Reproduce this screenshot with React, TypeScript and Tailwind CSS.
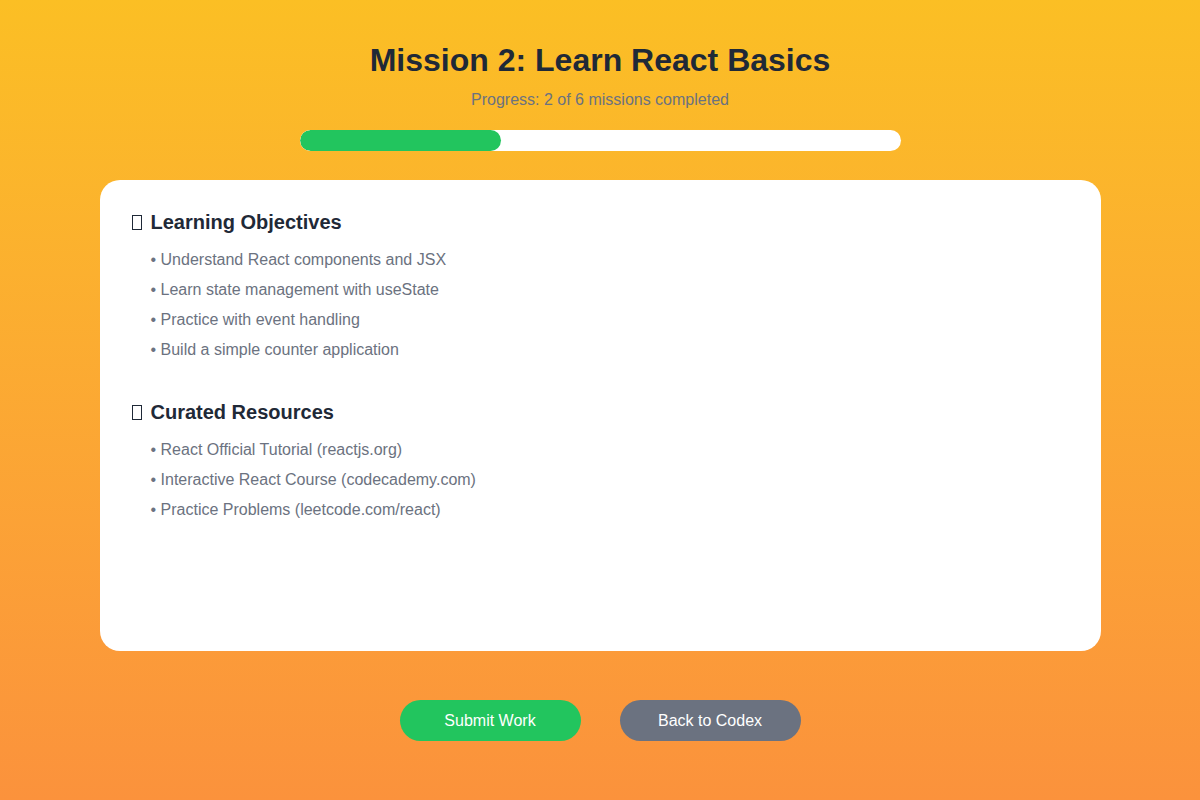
import React from "react";

const objectives = [
  "Understand React components and JSX",
  "Learn state management with useState",
  "Practice with event handling",
  "Build a simple counter application",
];

const resources = [
  "React Official Tutorial (reactjs.org)",
  "Interactive React Course (codecademy.com)",
  "Practice Problems (leetcode.com/react)",
];

function Section({ title, items, className }: { title: string; items: string[]; className?: string }) {
  return (
    <div className={className}>
      <h2 className="flex items-center text-[20px] leading-[23px] font-bold text-[#1f2937]">
        <span className="inline-block ml-[2px] mr-[9px] w-[10px] h-[15px] border border-[#1f2937]" />
        {title}
      </h2>
      <ul className="mt-[11px] pl-[21px]">
        {items.map((it) => (
          <li key={it} className="text-[16px] leading-[30px] text-[#6b7280]">
            • {it}
          </li>
        ))}
      </ul>
    </div>
  );
}

export default function App() {
  return (
    <div
      className="w-full h-[800px] bg-gradient-to-b from-[#fbbf24] to-[#fb923c] flex flex-col items-center pt-[42px]"
      style={{ fontFamily: '"Liberation Sans", Arial, sans-serif' }}
    >
      <h1 className="text-[32px] leading-[37px] font-bold text-[#1f2937]">Mission 2: Learn React Basics</h1>
      <p className="mt-[12px] text-[16px] leading-[18px] text-[#6b7280]">Progress: 2 of 6 missions completed</p>
      <div className="mt-[21px] w-[601px] h-[21px] bg-white rounded-full overflow-hidden">
        <div className="h-full w-[201px] bg-[#22c55e] rounded-full" />
      </div>
      <div className="mt-[29px] w-[1001px] h-[471px] bg-white rounded-[20px] px-[30px] pt-[31px]">
        <Section title="Learning Objectives" items={objectives} />
        <Section title="Curated Resources" items={resources} className="mt-[36px]" />
      </div>
      <div className="mt-[49px] flex gap-[39px]">
        <button className="w-[181px] h-[41px] rounded-full bg-[#22c55e] text-white text-[16px]">Submit Work</button>
        <button className="w-[181px] h-[41px] rounded-full bg-[#6b7280] text-white text-[16px]">Back to Codex</button>
      </div>
    </div>
  );
}
